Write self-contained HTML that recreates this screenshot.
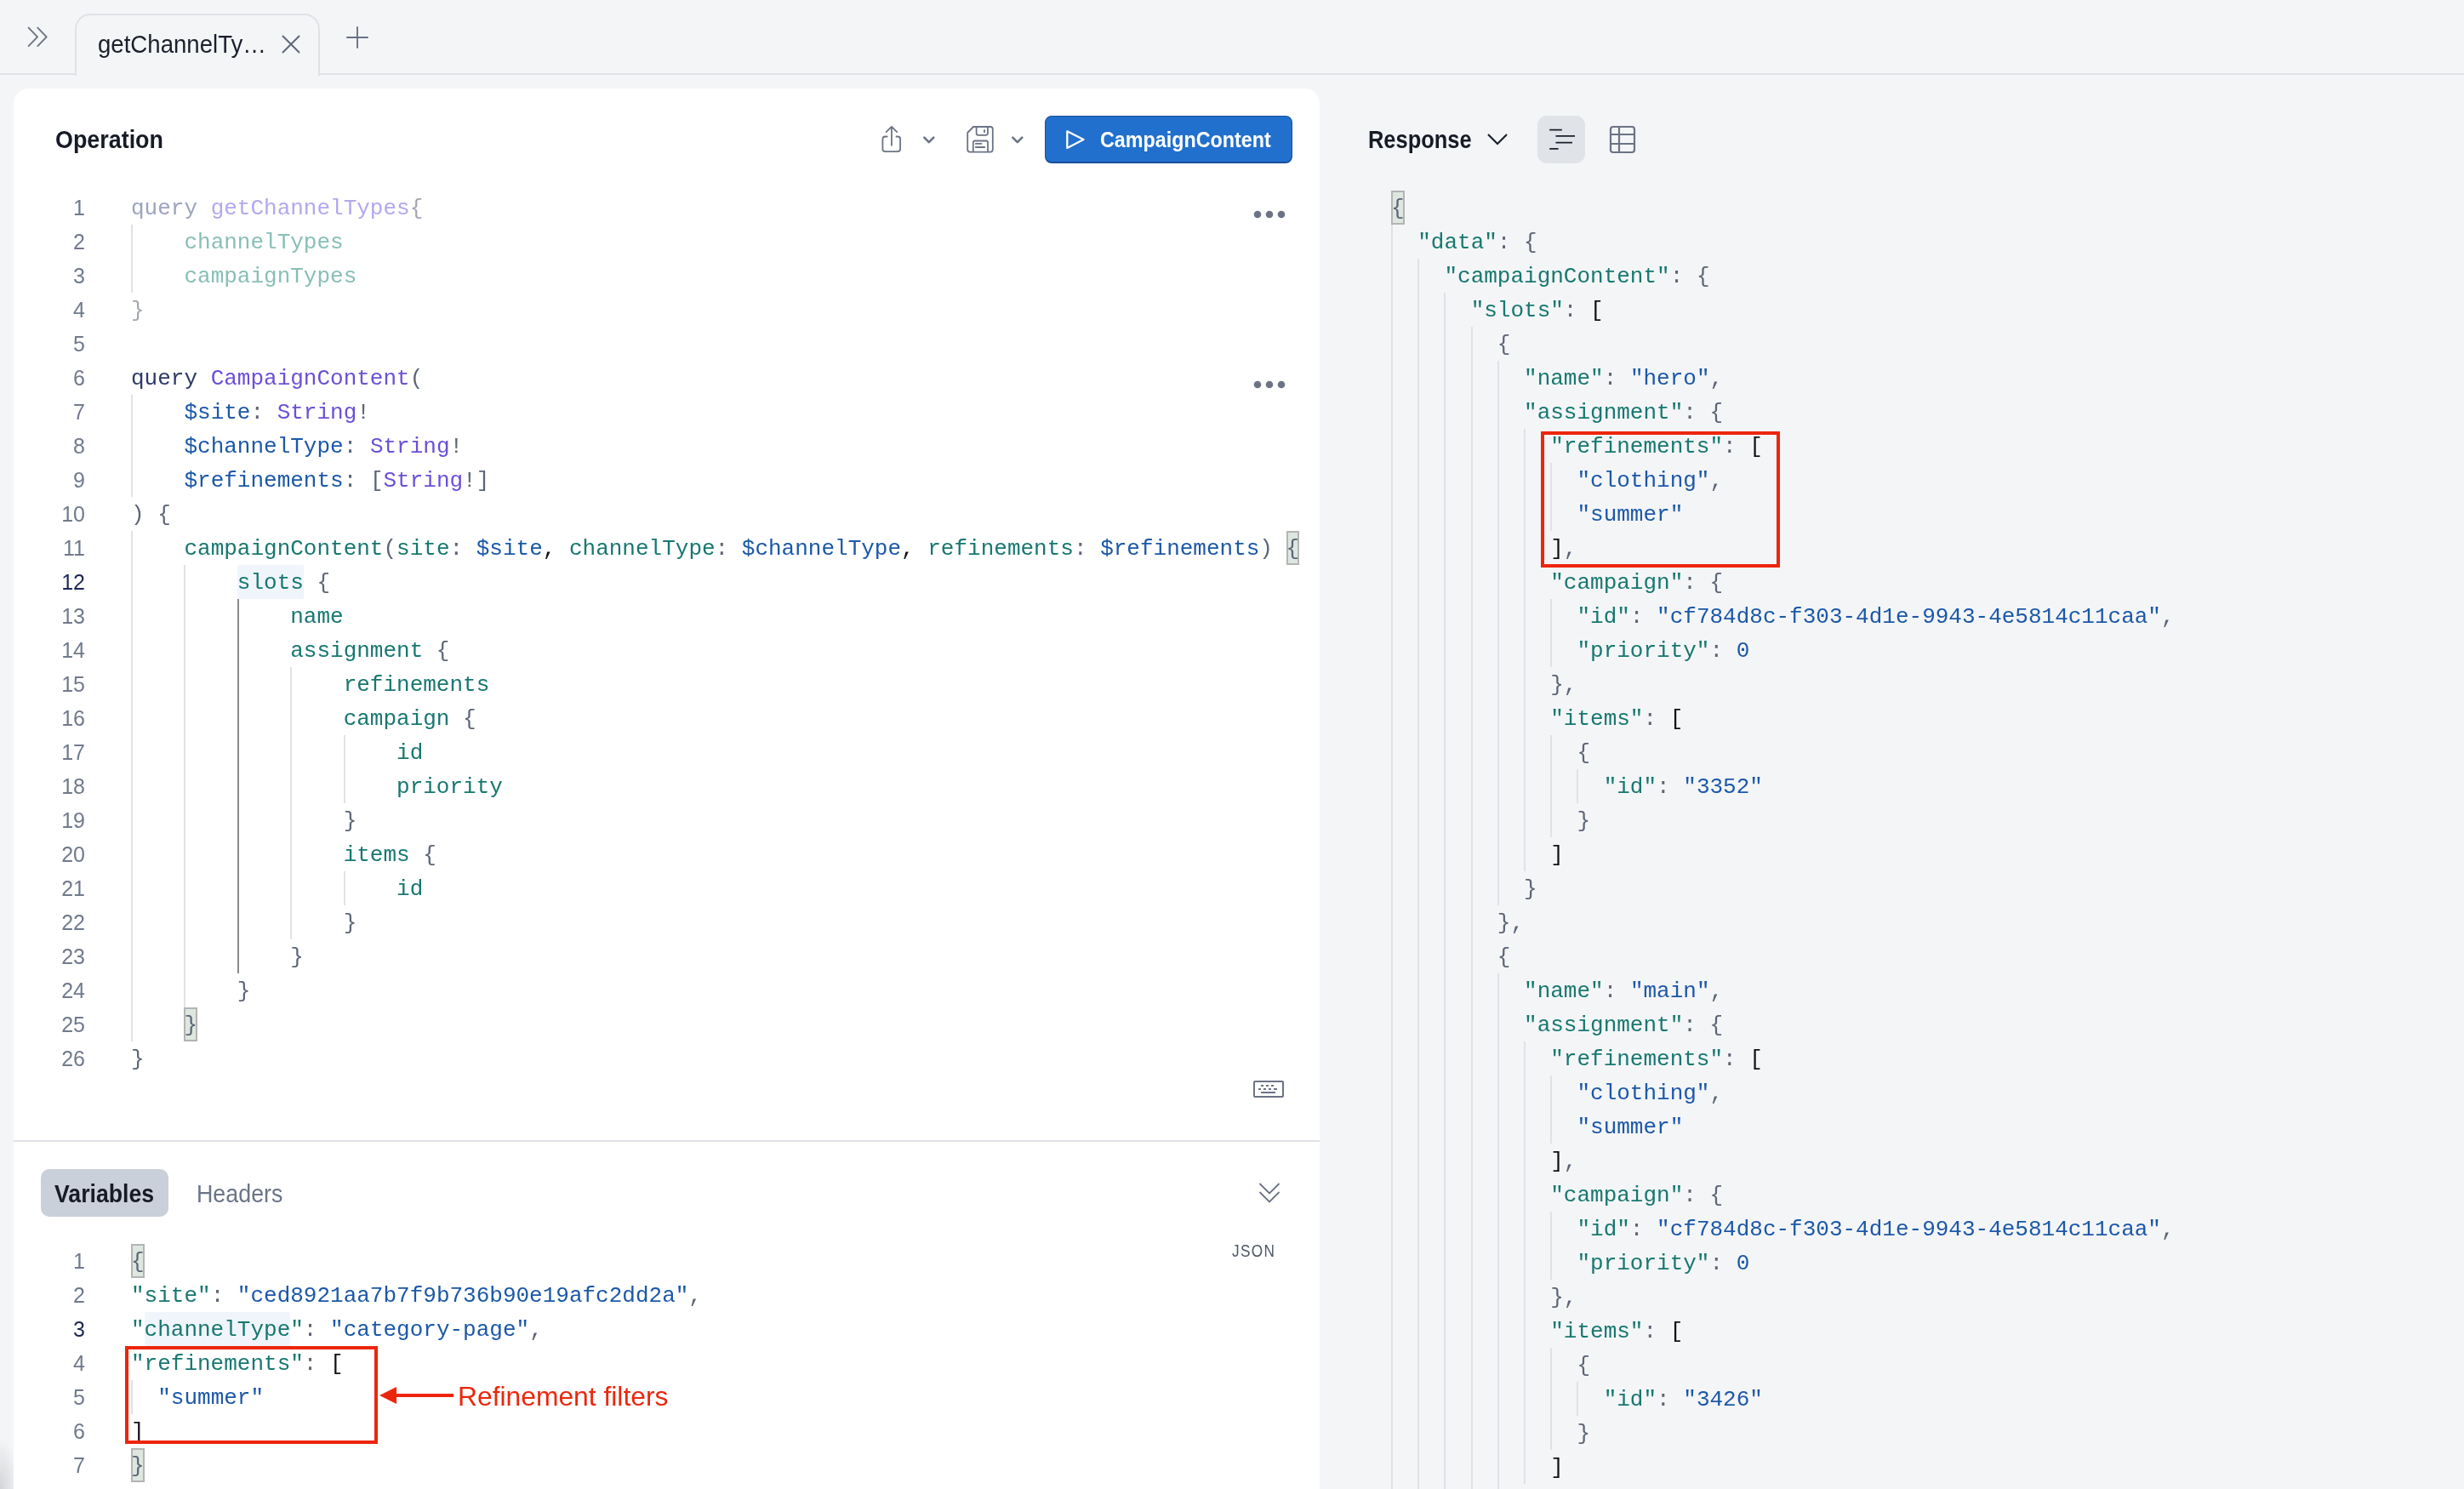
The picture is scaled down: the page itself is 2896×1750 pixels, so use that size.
<!DOCTYPE html>
<html><head><meta charset="utf-8"><title>Explorer</title>
<style>
html,body{margin:0;padding:0}
body{width:2896px;height:1750px;overflow:hidden;background:#f4f5f7;position:relative;font-family:"Liberation Sans",sans-serif;color:#1a1f2b}
.abs{position:absolute}
.topline{position:absolute;left:0;top:86px;width:2896px;height:2px;background:#dfe2e7}
.tab{position:absolute;left:88px;top:16px;width:284px;height:71px;border:2px solid #dfe2e7;border-bottom:none;border-radius:18px 18px 0 0;background:#f4f5f7}
.tabtxt{position:absolute;left:115px;top:34px;font-size:30px;line-height:36px;color:#1a1f2b;white-space:nowrap;transform:scaleX(0.92);transform-origin:0 0}
.panel{position:absolute;left:16px;top:104px;width:1535px;height:1700px;background:#fff;border-radius:18px 18px 0 0}
.h{position:absolute;font-weight:bold;font-size:28px;line-height:36px;white-space:nowrap;color:#161b26;display:inline-block}
.cl{position:absolute;height:40px;line-height:40px;font-family:"Liberation Mono",monospace;font-size:26px;white-space:pre;color:#565f70}
.cl span{display:inline-block;height:40px;line-height:42px;vertical-align:top}
.ln{position:absolute;left:40px;width:60px;text-align:right;height:40px;line-height:40px;font-size:25px;color:#707a8c}
.ln.act{color:#1c2655}
.g{position:absolute;width:2px;background:#dfe2e7}
.g.ga{background:#8a8a8a}
.kw{color:#2d3a68}
.on{color:#6b4fd8}
.ty{color:#6b4fd8}
.va{color:#1b58a8}
.fd{color:#177870}
.st{color:#1b58a8}
.pu{color:#5c6575}
.bk{color:#111}
.kwf{color:#9ca4c0}
.onf{color:#b4a7ee}
.fdf{color:#88bfb6}
.puf{color:#a2a7b0}
.mb{background:#dde7df;box-shadow:inset 0 0 0 2px #b4b4b4}
.hl{background:#f0f5fc}
.redbox{position:absolute;border:4px solid #ec260c;box-sizing:border-box}
#root{position:absolute;left:0;top:0;width:2896px;height:1750px;will-change:transform}

</style></head>
<body>
<div id="root">
<div class="topline"></div>
<div class="tab"></div>
<svg class="abs" style="left:30px;top:30px" width="28" height="28" viewBox="0 0 28 28"><path d="M3.6 2.6 L14 13.4 L3.6 24.1 M14.3 2.6 L24.7 13.4 L14.3 24.1" fill="none" stroke="#6b7385" stroke-width="1.9" stroke-linecap="round" stroke-linejoin="round"/></svg>
<div class="tabtxt">getChannelTy…</div>
<svg class="abs" style="left:330px;top:40px" width="24" height="24" viewBox="0 0 24 24"><path d="M2.5 2.5 L21.5 21.5 M21.5 2.5 L2.5 21.5" fill="none" stroke="#5f697b" stroke-width="2" stroke-linecap="round"/></svg>
<svg class="abs" style="left:406px;top:30px" width="28" height="28" viewBox="0 0 28 28"><path d="M14 2 V26 M2 14 H26" fill="none" stroke="#687185" stroke-width="1.9" stroke-linecap="round"/></svg>

<div class="panel"></div>
<div class="abs blshadow" style="left:0;top:1680px;width:16px;height:70px;background:radial-gradient(ellipse 22px 60px at 0% 100%, rgba(60,65,75,0.18), rgba(60,65,75,0) 100%)"></div>
<div class="h" style="left:65px;top:146px;font-size:29px;transform:scaleX(0.927);transform-origin:0 0">Operation</div>

<!-- share icon -->
<svg class="abs" style="left:1030px;top:140px" width="36" height="46" viewBox="0 0 36 46"><path d="M12.7 20.5 H10.4 Q7.4 20.5 7.4 23.5 V35.1 Q7.4 38.1 10.4 38.1 H25.1 Q28.1 38.1 28.1 35.1 V23.5 Q28.1 20.5 25.1 20.5 H23.5 M17.9 30.8 V9 M11.6 15.2 L17.9 8.9 L24.2 15.2" fill="none" stroke="#6b7385" stroke-width="1.8" stroke-linecap="round" stroke-linejoin="round"/></svg>
<svg class="abs" style="left:1080px;top:154px" width="24" height="20" viewBox="0 0 24 20"><path d="M6.3 7.6 L11.8 13.1 L17.3 7.6" fill="none" stroke="#6b7385" stroke-width="2.6" stroke-linecap="round" stroke-linejoin="round"/></svg>
<!-- save icon -->
<svg class="abs" style="left:1130px;top:140px" width="44" height="46" viewBox="0 0 44 46"><path d="M14 9 H34 Q36.8 9 36.8 11.8 V35.8 Q36.8 38.6 34 38.6 H10 Q7.2 38.6 7.2 35.8 V16 Z M17.6 9 V16.5 Q17.6 18.9 20 18.9 H28.5 Q30.9 18.9 30.9 16.5 V9 M27 12.9 V15.2 M13.8 38.6 V27.5 Q13.8 25.5 15.8 25.5 H29 Q31 25.5 31 27.5 V38.6 M16.8 28.9 H23.4 M16.8 33 H27.2" fill="none" stroke="#6b7385" stroke-width="1.8" stroke-linecap="round" stroke-linejoin="round"/></svg>
<svg class="abs" style="left:1184px;top:154px" width="24" height="20" viewBox="0 0 24 20"><path d="M6.3 7.6 L11.8 13.1 L17.3 7.6" fill="none" stroke="#6b7385" stroke-width="2.6" stroke-linecap="round" stroke-linejoin="round"/></svg>
<!-- run button -->
<div class="abs" style="left:1228px;top:136px;width:291px;height:56px;box-sizing:border-box;background:#2170cd;border:1px solid #1a4f99;border-bottom-width:2px;border-radius:8px"></div>
<svg class="abs" style="left:1244px;top:144px" width="40" height="40" viewBox="0 0 40 40"><path d="M10.3 10.3 L29.5 20 L10.3 29.9 Z" fill="none" stroke="#fff" stroke-width="2.3" stroke-linejoin="round"/></svg>
<div class="h" style="left:1293px;top:146px;color:#fff;font-size:25.4px;transform:scaleX(0.918);transform-origin:0 0">CampaignContent</div>

<!-- dots -->
<svg class="abs" style="left:1468px;top:242px" width="48" height="20" viewBox="0 0 48 20"><circle cx="10" cy="10" r="4.3" fill="#6b7385"/><circle cx="24" cy="10" r="4.3" fill="#6b7385"/><circle cx="38" cy="10" r="4.3" fill="#6b7385"/></svg>
<svg class="abs" style="left:1468px;top:442px" width="48" height="20" viewBox="0 0 48 20"><circle cx="10" cy="10" r="4.3" fill="#6b7385"/><circle cx="24" cy="10" r="4.3" fill="#6b7385"/><circle cx="38" cy="10" r="4.3" fill="#6b7385"/></svg>

<div class="g" style="left:154.0px;top:264px;height:80px"></div>
<div class="g" style="left:154.0px;top:464px;height:120px"></div>
<div class="g" style="left:154.0px;top:624px;height:600px"></div>
<div class="g" style="left:216.4px;top:664px;height:520px"></div>
<div class="g ga" style="left:278.8px;top:704px;height:440px"></div>
<div class="g" style="left:341.2px;top:784px;height:320px"></div>
<div class="g" style="left:403.6px;top:864px;height:80px"></div>
<div class="g" style="left:403.6px;top:1024px;height:40px"></div>
<div class="ln" style="top:224px">1</div>
<div class="cl" style="top:224px;left:154px"><span class="kwf">query</span> <span class="onf">getChannelTypes</span><span class="puf">{</span></div>
<div class="ln" style="top:264px">2</div>
<div class="cl" style="top:264px;left:154px">    <span class="fdf">channelTypes</span></div>
<div class="ln" style="top:304px">3</div>
<div class="cl" style="top:304px;left:154px">    <span class="fdf">campaignTypes</span></div>
<div class="ln" style="top:344px">4</div>
<div class="cl" style="top:344px;left:154px"><span class="puf">}</span></div>
<div class="ln" style="top:384px">5</div>
<div class="cl" style="top:384px;left:154px"></div>
<div class="ln" style="top:424px">6</div>
<div class="cl" style="top:424px;left:154px"><span class="kw">query</span> <span class="on">CampaignContent</span><span class="pu">(</span></div>
<div class="ln" style="top:464px">7</div>
<div class="cl" style="top:464px;left:154px">    <span class="va">$site</span><span class="pu">: </span><span class="ty">String</span><span class="pu">!</span></div>
<div class="ln" style="top:504px">8</div>
<div class="cl" style="top:504px;left:154px">    <span class="va">$channelType</span><span class="pu">: </span><span class="ty">String</span><span class="pu">!</span></div>
<div class="ln" style="top:544px">9</div>
<div class="cl" style="top:544px;left:154px">    <span class="va">$refinements</span><span class="pu">: </span><span class="pu">[</span><span class="ty">String</span><span class="pu">!]</span></div>
<div class="ln" style="top:584px">10</div>
<div class="cl" style="top:584px;left:154px"><span class="pu">)</span><span class="pu"> {</span></div>
<div class="ln" style="top:624px">11</div>
<div class="cl" style="top:624px;left:154px">    <span class="fd">campaignContent</span><span class="pu">(</span><span class="fd">site</span><span class="pu">: </span><span class="va">$site</span><span class="bk">,</span> <span class="fd">channelType</span><span class="pu">: </span><span class="va">$channelType</span><span class="bk">,</span> <span class="fd">refinements</span><span class="pu">: </span><span class="va">$refinements</span><span class="pu">)</span> <span class="pu mb">{</span></div>
<div class="ln act" style="top:664px">12</div>
<div class="cl" style="top:664px;left:154px">        <span class="fd hl">slots</span><span class="pu"> {</span></div>
<div class="ln" style="top:704px">13</div>
<div class="cl" style="top:704px;left:154px">            <span class="fd">name</span></div>
<div class="ln" style="top:744px">14</div>
<div class="cl" style="top:744px;left:154px">            <span class="fd">assignment</span><span class="pu"> {</span></div>
<div class="ln" style="top:784px">15</div>
<div class="cl" style="top:784px;left:154px">                <span class="fd">refinements</span></div>
<div class="ln" style="top:824px">16</div>
<div class="cl" style="top:824px;left:154px">                <span class="fd">campaign</span><span class="pu"> {</span></div>
<div class="ln" style="top:864px">17</div>
<div class="cl" style="top:864px;left:154px">                    <span class="fd">id</span></div>
<div class="ln" style="top:904px">18</div>
<div class="cl" style="top:904px;left:154px">                    <span class="fd">priority</span></div>
<div class="ln" style="top:944px">19</div>
<div class="cl" style="top:944px;left:154px">                <span class="pu">}</span></div>
<div class="ln" style="top:984px">20</div>
<div class="cl" style="top:984px;left:154px">                <span class="fd">items</span><span class="pu"> {</span></div>
<div class="ln" style="top:1024px">21</div>
<div class="cl" style="top:1024px;left:154px">                    <span class="fd">id</span></div>
<div class="ln" style="top:1064px">22</div>
<div class="cl" style="top:1064px;left:154px">                <span class="pu">}</span></div>
<div class="ln" style="top:1104px">23</div>
<div class="cl" style="top:1104px;left:154px">            <span class="pu">}</span></div>
<div class="ln" style="top:1144px">24</div>
<div class="cl" style="top:1144px;left:154px">        <span class="pu">}</span></div>
<div class="ln" style="top:1184px">25</div>
<div class="cl" style="top:1184px;left:154px">    <span class="pu mb">}</span></div>
<div class="ln" style="top:1224px">26</div>
<div class="cl" style="top:1224px;left:154px"><span class="pu">}</span></div>

<!-- keyboard -->
<svg class="abs" style="left:1471px;top:1268px" width="40" height="24" viewBox="0 0 40 24"><rect x="3" y="3" width="34" height="18" rx="1" fill="none" stroke="#6b7385" stroke-width="2"/><path d="M11 8 H14 M17 8 H20 M23 8 H26 M8 12 H11 M14 12 H17 M20 12 H23 M26 12 H30 M11 16 H28" stroke="#6b7385" stroke-width="1.8"/></svg>

<div class="abs" style="left:16px;top:1340px;width:1535px;height:2px;background:#dfe2e7"></div>
<div class="abs" style="left:48px;top:1374px;width:150px;height:56px;border-radius:10px;background:#cad0d9"></div>
<div class="h" style="left:64px;top:1385px;font-size:29px;transform:scaleX(0.92);transform-origin:0 0">Variables</div>
<div class="h" style="left:231px;top:1385px;font-size:29px;font-weight:normal;color:#6b7588;transform:scaleX(0.925);transform-origin:0 0">Headers</div>
<svg class="abs" style="left:1478px;top:1388px" width="28" height="28" viewBox="0 0 28 28"><path d="M3 3.5 L14 14.5 L25 3.5 M3 13.5 L14 24.5 L25 13.5" fill="none" stroke="#687184" stroke-width="1.8" stroke-linecap="round"/></svg>
<div class="abs" style="left:1448px;top:1458px;font-size:20px;line-height:24px;letter-spacing:1.6px;color:#4e5768;transform:scaleX(0.86);transform-origin:0 0">JSON</div>

<div class="g" style="left:154.0px;top:1622px;height:40px"></div>
<div class="ln" style="top:1462px">1</div>
<div class="cl" style="top:1462px;left:154px"><span class="pu mb">{</span></div>
<div class="ln" style="top:1502px">2</div>
<div class="cl" style="top:1502px;left:154px"><span class="fd">"site"</span><span class="pu">: </span><span class="st">"ced8921aa7b7f9b736b90e19afc2dd2a"</span><span class="pu">,</span></div>
<div class="ln act" style="top:1542px">3</div>
<div class="cl" style="top:1542px;left:154px"><span class="fd">"</span><span class="fd hl">channelType</span><span class="fd">"</span><span class="pu">: </span><span class="st">"category-page"</span><span class="pu">,</span></div>
<div class="ln" style="top:1582px">4</div>
<div class="cl" style="top:1582px;left:154px"><span class="fd">"refinements"</span><span class="pu">: </span><span class="bk">[</span></div>
<div class="ln" style="top:1622px">5</div>
<div class="cl" style="top:1622px;left:154px">  <span class="st">"summer"</span></div>
<div class="ln" style="top:1662px">6</div>
<div class="cl" style="top:1662px;left:154px"><span class="bk">]</span></div>
<div class="ln" style="top:1702px">7</div>
<div class="cl" style="top:1702px;left:154px"><span class="pu mb">}</span></div>

<!-- response header -->
<div class="h" style="left:1608px;top:146px;font-size:29px;transform:scaleX(0.877);transform-origin:0 0">Response</div>
<svg class="abs" style="left:1746px;top:154px" width="28" height="20" viewBox="0 0 28 20"><path d="M3 4 L14 15 L25 4" fill="none" stroke="#1a1f2b" stroke-width="2.2"/></svg>
<div class="abs" style="left:1807px;top:136px;width:56px;height:56px;border-radius:11px;background:#e0e3e8"></div>
<svg class="abs" style="left:1810px;top:140px" width="50" height="50" viewBox="0 0 50 50"><path d="M11.2 12.6 H25.8 M18.5 19.9 H41 M18.5 27.6 H38 M11.2 34.9 H21.6" stroke="#1a1f2b" stroke-width="1.9"/></svg>
<svg class="abs" style="left:1890px;top:146px" width="34" height="36" viewBox="0 0 34 36"><rect x="3" y="3" width="28" height="30" rx="3" fill="none" stroke="#6b7385" stroke-width="2.2"/><path d="M13 3 V33 M3 12 H31 M3 23 H31" stroke="#6b7385" stroke-width="2.2"/></svg>

<div class="g" style="left:1635.0px;top:264px;height:1560px"></div>
<div class="g" style="left:1666.2px;top:304px;height:1520px"></div>
<div class="g" style="left:1697.4px;top:344px;height:1480px"></div>
<div class="g" style="left:1728.6px;top:384px;height:1440px"></div>
<div class="g" style="left:1759.8px;top:424px;height:640px"></div>
<div class="g" style="left:1759.8px;top:1144px;height:640px"></div>
<div class="g" style="left:1791.0px;top:504px;height:520px"></div>
<div class="g" style="left:1791.0px;top:1224px;height:520px"></div>
<div class="g" style="left:1822.2px;top:544px;height:80px"></div>
<div class="g" style="left:1822.2px;top:704px;height:80px"></div>
<div class="g" style="left:1822.2px;top:864px;height:120px"></div>
<div class="g" style="left:1822.2px;top:1264px;height:80px"></div>
<div class="g" style="left:1822.2px;top:1424px;height:80px"></div>
<div class="g" style="left:1822.2px;top:1584px;height:120px"></div>
<div class="g" style="left:1853.4px;top:904px;height:40px"></div>
<div class="g" style="left:1853.4px;top:1624px;height:40px"></div>
<div class="cl" style="top:224px;left:1635px"><span class="pu mb">{</span></div>
<div class="cl" style="top:264px;left:1635px">  <span class="fd">"data"</span><span class="pu">: </span><span class="pu">{</span></div>
<div class="cl" style="top:304px;left:1635px">    <span class="fd">"campaignContent"</span><span class="pu">: </span><span class="pu">{</span></div>
<div class="cl" style="top:344px;left:1635px">      <span class="fd">"slots"</span><span class="pu">: </span><span class="bk">[</span></div>
<div class="cl" style="top:384px;left:1635px">        <span class="pu">{</span></div>
<div class="cl" style="top:424px;left:1635px">          <span class="fd">"name"</span><span class="pu">: </span><span class="st">"hero"</span><span class="pu">,</span></div>
<div class="cl" style="top:464px;left:1635px">          <span class="fd">"assignment"</span><span class="pu">: </span><span class="pu">{</span></div>
<div class="cl" style="top:504px;left:1635px">            <span class="fd">"refinements"</span><span class="pu">: </span><span class="bk">[</span></div>
<div class="cl" style="top:544px;left:1635px">              <span class="st">"clothing"</span><span class="pu">,</span></div>
<div class="cl" style="top:584px;left:1635px">              <span class="st">"summer"</span></div>
<div class="cl" style="top:624px;left:1635px">            <span class="bk">]</span><span class="pu">,</span></div>
<div class="cl" style="top:664px;left:1635px">            <span class="fd">"campaign"</span><span class="pu">: </span><span class="pu">{</span></div>
<div class="cl" style="top:704px;left:1635px">              <span class="fd">"id"</span><span class="pu">: </span><span class="st">"cf784d8c-f303-4d1e-9943-4e5814c11caa"</span><span class="pu">,</span></div>
<div class="cl" style="top:744px;left:1635px">              <span class="fd">"priority"</span><span class="pu">: </span><span class="st">0</span></div>
<div class="cl" style="top:784px;left:1635px">            <span class="pu">}</span><span class="pu">,</span></div>
<div class="cl" style="top:824px;left:1635px">            <span class="fd">"items"</span><span class="pu">: </span><span class="bk">[</span></div>
<div class="cl" style="top:864px;left:1635px">              <span class="pu">{</span></div>
<div class="cl" style="top:904px;left:1635px">                <span class="fd">"id"</span><span class="pu">: </span><span class="st">"3352"</span></div>
<div class="cl" style="top:944px;left:1635px">              <span class="pu">}</span></div>
<div class="cl" style="top:984px;left:1635px">            <span class="bk">]</span></div>
<div class="cl" style="top:1024px;left:1635px">          <span class="pu">}</span></div>
<div class="cl" style="top:1064px;left:1635px">        <span class="pu">}</span><span class="pu">,</span></div>
<div class="cl" style="top:1104px;left:1635px">        <span class="pu">{</span></div>
<div class="cl" style="top:1144px;left:1635px">          <span class="fd">"name"</span><span class="pu">: </span><span class="st">"main"</span><span class="pu">,</span></div>
<div class="cl" style="top:1184px;left:1635px">          <span class="fd">"assignment"</span><span class="pu">: </span><span class="pu">{</span></div>
<div class="cl" style="top:1224px;left:1635px">            <span class="fd">"refinements"</span><span class="pu">: </span><span class="bk">[</span></div>
<div class="cl" style="top:1264px;left:1635px">              <span class="st">"clothing"</span><span class="pu">,</span></div>
<div class="cl" style="top:1304px;left:1635px">              <span class="st">"summer"</span></div>
<div class="cl" style="top:1344px;left:1635px">            <span class="bk">]</span><span class="pu">,</span></div>
<div class="cl" style="top:1384px;left:1635px">            <span class="fd">"campaign"</span><span class="pu">: </span><span class="pu">{</span></div>
<div class="cl" style="top:1424px;left:1635px">              <span class="fd">"id"</span><span class="pu">: </span><span class="st">"cf784d8c-f303-4d1e-9943-4e5814c11caa"</span><span class="pu">,</span></div>
<div class="cl" style="top:1464px;left:1635px">              <span class="fd">"priority"</span><span class="pu">: </span><span class="st">0</span></div>
<div class="cl" style="top:1504px;left:1635px">            <span class="pu">}</span><span class="pu">,</span></div>
<div class="cl" style="top:1544px;left:1635px">            <span class="fd">"items"</span><span class="pu">: </span><span class="bk">[</span></div>
<div class="cl" style="top:1584px;left:1635px">              <span class="pu">{</span></div>
<div class="cl" style="top:1624px;left:1635px">                <span class="fd">"id"</span><span class="pu">: </span><span class="st">"3426"</span></div>
<div class="cl" style="top:1664px;left:1635px">              <span class="pu">}</span></div>
<div class="cl" style="top:1704px;left:1635px">            <span class="bk">]</span></div>
<div class="cl" style="top:1744px;left:1635px">          <span class="pu">}</span></div>
<div class="cl" style="top:1784px;left:1635px">        <span class="pu">}</span></div>

<div class="redbox" style="left:1811px;top:507px;width:281px;height:160px"></div>
<div class="redbox" style="left:147px;top:1582px;width:297px;height:115px"></div>
<svg class="abs" style="left:440px;top:1626px" width="100" height="30" viewBox="0 0 100 30"><path d="M6 14 L26 4 L26 24 Z" fill="#ec260c"/><rect x="24" y="12" width="69" height="4" fill="#ec260c"/></svg>
<div class="abs" style="left:538px;top:1623px;font-size:31.8px;line-height:36px;color:#ec260c;white-space:nowrap">Refinement filters</div>

</div>
</body></html>
